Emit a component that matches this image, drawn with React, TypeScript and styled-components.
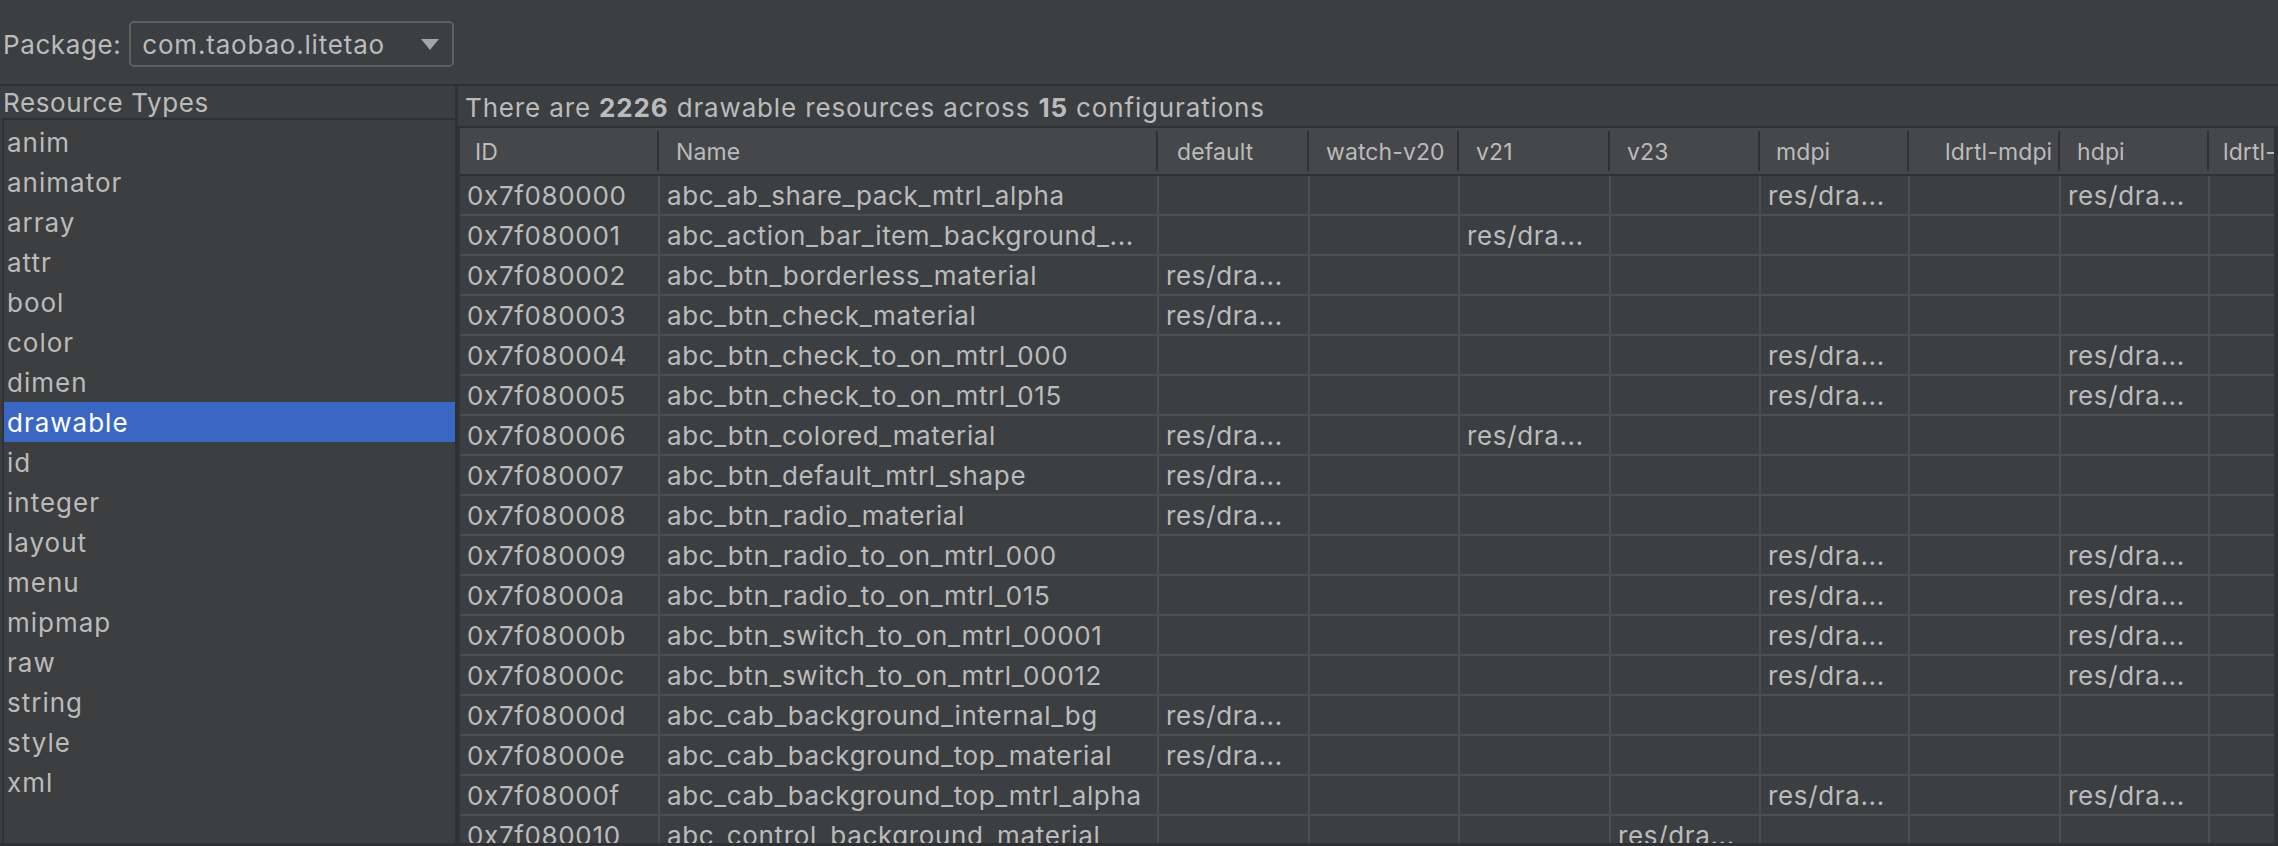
import React from "react";
import styled, { createGlobalStyle } from "styled-components";

const GlobalStyle = createGlobalStyle`
  html, body {
    margin: 0;
    padding: 0;
    background: #3c3f41;
    overflow: hidden;
  }
  * { box-sizing: border-box; }
`;

const FONT = `"Inter", "Noto Sans", "Liberation Sans", sans-serif`;

const Window = styled.div`
  width: 2278px;
  height: 846px;
  display: flex;
  flex-direction: column;
  background: #3c3f41;
  color: #bbbbbb;
  font-family: ${FONT};
  font-size: 26px;
  border-bottom: 3px solid #2f3133;
  overflow: hidden;
`;

const TopBar = styled.div`
  height: 84px;
  flex: none;
  display: flex;
  align-items: center;
  gap: 8px;
  padding: 4px 0 0 3px;
`;

const Label = styled.span`
  letter-spacing: 0.6px;
`;

const Combo = styled.div`
  width: 325px;
  height: 46px;
  border: 2px solid #5d5f61;
  border-radius: 5px;
  display: flex;
  align-items: center;
  justify-content: space-between;
  padding: 0 13px 0 11px;
  letter-spacing: 0.8px;
`;

const Arrow = styled.span`
  width: 0;
  height: 0;
  border-left: 9px solid transparent;
  border-right: 9px solid transparent;
  border-top: 11px solid #a4a5a6;
`;

const Divider = styled.div`
  height: 2px;
  flex: none;
  background: #2f3133;
`;

const Main = styled.div`
  flex: 1;
  min-height: 0;
  display: flex;
`;

const LeftPanel = styled.div`
  width: 455px;
  flex: none;
  display: flex;
  flex-direction: column;
`;

const PanelTitle = styled.div`
  height: 32px;
  flex: none;
  display: flex;
  align-items: center;
  padding-left: 3px;
  letter-spacing: 0.6px;
`;

const TypeList = styled.div`
  flex: 1;
  margin-left: 2px;
  border-top: 2px solid #2f3133;
  border-left: 2px solid #2f3133;
  background: #3c3e40;
  display: flex;
  flex-direction: column;
  padding-top: 2px;
`;

const TypeItem = styled.div<{ $selected?: boolean }>`
  height: 40px;
  flex: none;
  display: flex;
  align-items: center;
  padding-left: 3px;
  letter-spacing: 1px;
  background: ${(p) => (p.$selected ? "#3b67c4" : "transparent")};
  color: ${(p) => (p.$selected ? "#ffffff" : "#bbbbbb")};
`;

const Splitter = styled.div`
  width: 3px;
  flex: none;
  background: #2f3133;
`;

const RightPanel = styled.div`
  flex: 1;
  min-width: 0;
  display: flex;
  flex-direction: column;
`;

const Summary = styled.div`
  height: 42px;
  flex: none;
  display: flex;
  align-items: center;
  padding: 2px 0 0 7px;
  border-bottom: 2px solid #2f3133;
  letter-spacing: 0.85px;
  b { font-weight: 700; }
`;

const TableArea = styled.div`
  flex: 1;
  min-height: 0;
  display: flex;
  padding-left: 2px;
  padding-right: 4px;
  background: #313335;
`;

const Viewport = styled.div`
  flex: 1;
  min-width: 0;
  overflow: hidden;
  background: #3c3f41;
`;

const Table = styled.table`
  border-collapse: collapse;
  table-layout: fixed;
  width: 1901px;
  font-size: 26px;
  letter-spacing: 0.65px;
`;

const HeadCell = styled.th<{ $pad?: number }>`
  position: relative;
  height: 47px;
  padding: 2px 0 0 ${(p) => p.$pad ?? 17}px;
  text-align: left;
  font-weight: 400;
  font-size: 23px;
  letter-spacing: 0.1px;
  background: #45474a;
  border-bottom: 2px solid #2f3133;
  white-space: nowrap;
  overflow: hidden;
  &::after {
    content: "";
    position: absolute;
    right: 0;
    top: 3px;
    bottom: 3px;
    width: 2px;
    background: #2f3133;
  }
`;

const Cell = styled.td`
  height: 40px;
  padding: 0 0 0 7px;
  border-right: 2px solid #4c4e50;
  border-bottom: 2px solid #4c4e50;
  white-space: nowrap;
  overflow: hidden;
`;

const types = [
  "anim", "animator", "array", "attr", "bool", "color", "dimen", "drawable",
  "id", "integer", "layout", "menu", "mipmap", "raw", "string", "style", "xml",
];

const columns: { label: string; width: number; pad?: number }[] = [
  { label: "ID", width: 199, pad: 15 },
  { label: "Name", width: 499 },
  { label: "default", width: 151, pad: 19 },
  { label: "watch-v20", width: 150 },
  { label: "v21", width: 151 },
  { label: "v23", width: 150 },
  { label: "mdpi", width: 149, pad: 16 },
  { label: "ldrtl-mdpi", width: 151, pad: 36 },
  { label: "hdpi", width: 149 },
  { label: "ldrtl-hdpi", width: 151, pad: 14 },
];

type Row = { id: string; name: string; cfg: number[] };

// config indexes: 0 default, 1 watch-v20, 2 v21, 3 v23, 4 mdpi, 5 ldrtl-mdpi, 6 hdpi, 7 ldrtl-hdpi
const rows: Row[] = [
  { id: "0x7f080000", name: "abc_ab_share_pack_mtrl_alpha", cfg: [4, 6] },
  { id: "0x7f080001", name: "abc_action_bar_item_background_...", cfg: [2] },
  { id: "0x7f080002", name: "abc_btn_borderless_material", cfg: [0] },
  { id: "0x7f080003", name: "abc_btn_check_material", cfg: [0] },
  { id: "0x7f080004", name: "abc_btn_check_to_on_mtrl_000", cfg: [4, 6] },
  { id: "0x7f080005", name: "abc_btn_check_to_on_mtrl_015", cfg: [4, 6] },
  { id: "0x7f080006", name: "abc_btn_colored_material", cfg: [0, 2] },
  { id: "0x7f080007", name: "abc_btn_default_mtrl_shape", cfg: [0] },
  { id: "0x7f080008", name: "abc_btn_radio_material", cfg: [0] },
  { id: "0x7f080009", name: "abc_btn_radio_to_on_mtrl_000", cfg: [4, 6] },
  { id: "0x7f08000a", name: "abc_btn_radio_to_on_mtrl_015", cfg: [4, 6] },
  { id: "0x7f08000b", name: "abc_btn_switch_to_on_mtrl_00001", cfg: [4, 6] },
  { id: "0x7f08000c", name: "abc_btn_switch_to_on_mtrl_00012", cfg: [4, 6] },
  { id: "0x7f08000d", name: "abc_cab_background_internal_bg", cfg: [0] },
  { id: "0x7f08000e", name: "abc_cab_background_top_material", cfg: [0] },
  { id: "0x7f08000f", name: "abc_cab_background_top_mtrl_alpha", cfg: [4, 6] },
  { id: "0x7f080010", name: "abc_control_background_material", cfg: [3] },
];

export default function App() {
  return (
    <>
      <GlobalStyle />
      <Window>
        <TopBar>
          <Label>Package:</Label>
          <Combo>
            <span>com.taobao.litetao</span>
            <Arrow />
          </Combo>
        </TopBar>
        <Divider />
        <Main>
          <LeftPanel>
            <PanelTitle>Resource Types</PanelTitle>
            <TypeList>
              {types.map((t) => (
                <TypeItem key={t} $selected={t === "drawable"}>
                  {t}
                </TypeItem>
              ))}
            </TypeList>
          </LeftPanel>
          <Splitter />
          <RightPanel>
            <Summary>
              <span>
                There are <b>2226</b> drawable resources across <b>15</b> configurations
              </span>
            </Summary>
            <TableArea>
              <Viewport>
                <Table>
                  <colgroup>
                    {columns.map((c) => (
                      <col key={c.label} style={{ width: c.width }} />
                    ))}
                  </colgroup>
                  <thead>
                    <tr>
                      {columns.map((c) => (
                        <HeadCell key={c.label} $pad={c.pad}>
                          {c.label}
                        </HeadCell>
                      ))}
                    </tr>
                  </thead>
                  <tbody>
                    {rows.map((r) => (
                      <tr key={r.id}>
                        <Cell>{r.id}</Cell>
                        <Cell>{r.name}</Cell>
                        {Array.from({ length: 8 }, (_, i) => (
                          <Cell key={i}>{r.cfg.includes(i) ? "res/dra..." : ""}</Cell>
                        ))}
                      </tr>
                    ))}
                  </tbody>
                </Table>
              </Viewport>
            </TableArea>
          </RightPanel>
        </Main>
      </Window>
    </>
  );
}
